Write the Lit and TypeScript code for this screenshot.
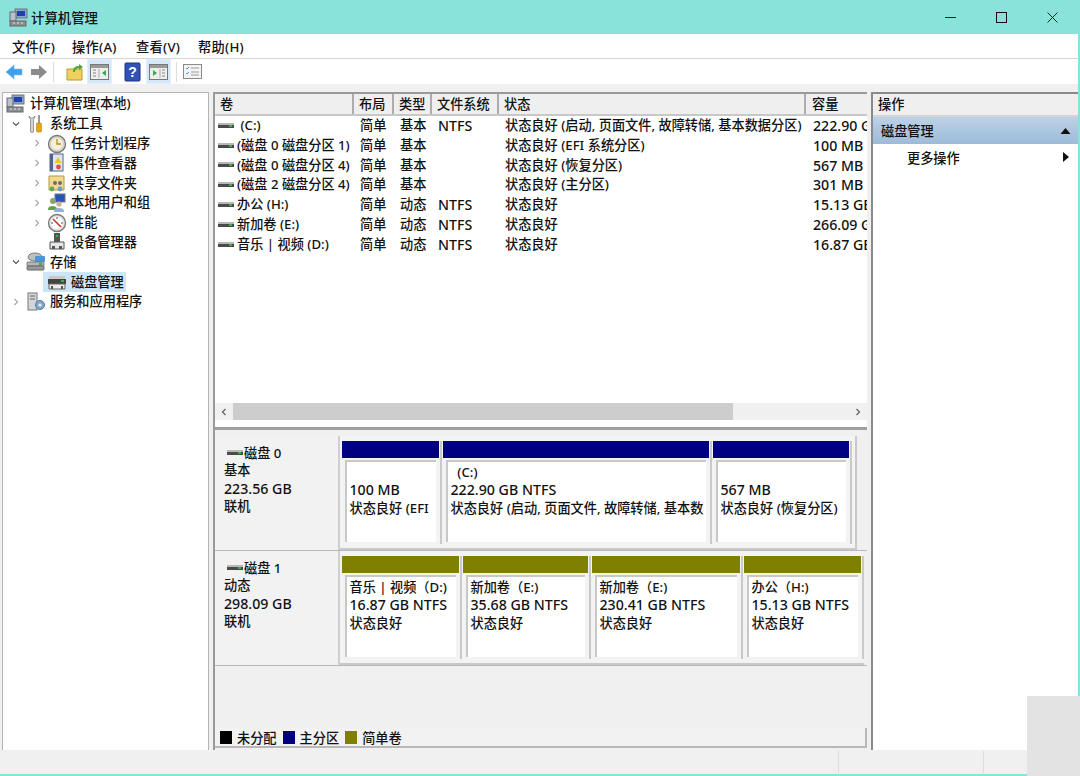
import { LitElement, html, css, svg } from 'lit';
import { customElement } from 'lit/decorators.js';

const driveIcon = html`<svg class="drive" width="16" height="8" viewBox="0 0 16 8">
  <rect x="0" y="1" width="16" height="2" fill="#b8b8b8" />
  <rect x="0" y="3" width="16" height="3" fill="#4a4a4a" />
  <rect x="11" y="3" width="3" height="2" fill="#35b04a" />
</svg>`;

const computerIcon = html`<svg width="19" height="19" viewBox="0 0 19 19">
  <rect x="6" y="1" width="12" height="9" fill="#8fa3c4" stroke="#6a7688" />
  <rect x="8" y="3" width="8" height="5" fill="#1c3fc0" />
  <rect x="1" y="4" width="6" height="9" fill="#b9c0ca" stroke="#667" />
  <rect x="1" y="13" width="16" height="5" fill="#8b8f94" stroke="#666" />
  <path d="M4 15h2M8 15h2M12 15h2" stroke="#e4e4e4" />
</svg>`;

const tools = svg`<path d="M3 2c0 2 1 3 1.500 3.500V17a1.500 1.500 0 0 0 3 0V5.500C8 5 9 4 9 2L7 4H5z" fill="#d4d4d4" stroke="#777" stroke-width=".7"/><rect x="12" y="1" width="2" height="8" fill="#9a9a9a"/><rect x="10.500" y="9" width="5" height="9" rx="1" fill="#e8a510" stroke="#a87406" stroke-width=".5"/>`;
const clock = svg`<circle cx="10" cy="10" r="8.500" fill="#d9d4c0" stroke="#777" stroke-width="1.300"/><circle cx="10" cy="10" r="6" fill="#f4efdc"/><path d="M10 5v5h4" fill="none" stroke="#b58a1d" stroke-width="1.300"/>`;
const eventLog = svg`<rect x="3" y="1" width="13" height="17" fill="#dfe4f0" stroke="#52648c"/><rect x="3" y="1" width="3" height="17" fill="#52648c"/><path d="M11 4l3.500 6h-7z" fill="#f2c21d"/><circle cx="11.500" cy="14" r="2.400" fill="#d05050"/>`;
const share = svg`<path d="M2 3h15v14H2z" fill="#f2d98b" stroke="#b59a4a"/><circle cx="8" cy="10" r="2" fill="#6c6c6c"/><circle cx="13" cy="10" r="2" fill="#6c6c6c"/><circle cx="5" cy="16" r="2.400" fill="#5cab5c"/><circle cx="13" cy="16" r="2.400" fill="#6c9bcc"/>`;
const users = svg`<rect x="8" y="1" width="10" height="8" fill="#2a53c0" stroke="#777"/><circle cx="6" cy="8" r="3" fill="#8aa070"/><path d="M1 16c0-4 9-4 9 0v1H1z" fill="#62a050"/><circle cx="12" cy="11" r="2.600" fill="#c8b090"/><path d="M7 18c0-4 10-4 10 0v1H7z" fill="#90b0d8"/>`;
const perf = svg`<circle cx="10" cy="10" r="8.500" fill="#e2e2e2" stroke="#777" stroke-width="1.300"/><circle cx="10" cy="10" r="6" fill="#fff"/><path d="M6 6l8 8" stroke="#c8322a" stroke-width="1.600"/><path d="M10 4v2M4 10h2M14 10h2" stroke="#555"/>`;
const device = svg`<rect x="7" y="1" width="6" height="9" fill="#555"/><rect x="9" y="3" width="2" height="2" fill="#35b04a"/><path d="M3 10h14v7H3z" fill="#e6e6e6" stroke="#555"/><rect x="5" y="14" width="3" height="3" fill="#555"/><rect x="12" y="14" width="3" height="3" fill="#555"/>`;
const storage = svg`<ellipse cx="9" cy="5" rx="7" ry="4" fill="#b9c4b9" stroke="#777"/><rect x="9" y="4" width="10" height="6" rx="1" fill="#4c94d8"/><rect x="1" y="10" width="17" height="4" rx="1" fill="#b8b8b8" stroke="#777"/><rect x="1" y="14" width="17" height="4" rx="1" fill="#999" stroke="#666"/><rect x="13" y="11" width="3" height="2" fill="#35b04a"/>`;
const disk = svg`<rect x="2" y="4" width="16" height="3" fill="#c8c8c8"/><rect x="1" y="7" width="18" height="5" fill="#444"/><rect x="14" y="8" width="3" height="2" fill="#35b04a"/><path d="M2 12h16v5H2z" fill="#eee" stroke="#666"/><rect x="4" y="14" width="2" height="3" fill="#555"/><rect x="14" y="14" width="2" height="3" fill="#555"/>`;
const services = svg`<rect x="2" y="1" width="9" height="17" fill="#d2d6dc" stroke="#777"/><path d="M4 4h5M4 7h5" stroke="#666"/><circle cx="14" cy="13" r="4.500" fill="#7fa8cc" stroke="#5a7a99"/><circle cx="14" cy="13" r="1.600" fill="#eef"/>`;

const treeIcon = (body: unknown) => html`<svg width="20" height="20" viewBox="0 0 20 20">${body}</svg>`;

const chevR = html`<svg width="8" height="8" viewBox="0 0 8 8"><path d="M2.500 1l3 3-3 3" fill="none" stroke="#a6a6a6" stroke-width="1.100" /></svg>`;
const chevD = html`<svg width="8" height="8" viewBox="0 0 8 8"><path d="M1 2.500l3 3 3-3" fill="none" stroke="#555" stroke-width="1.100" /></svg>`;

const treeRows = [
  { label: '系统工具', level: 1, arrow: 'd', icon: tools },
  { label: '任务计划程序', level: 2, arrow: 'r', icon: clock },
  { label: '事件查看器', level: 2, arrow: 'r', icon: eventLog },
  { label: '共享文件夹', level: 2, arrow: 'r', icon: share },
  { label: '本地用户和组', level: 2, arrow: 'r', icon: users },
  { label: '性能', level: 2, arrow: 'r', icon: perf },
  { label: '设备管理器', level: 2, arrow: '', icon: device },
  { label: '存储', level: 1, arrow: 'd', icon: storage },
  { label: '磁盘管理', level: 2, arrow: '', icon: disk, selected: true },
  { label: '服务和应用程序', level: 1, arrow: 'r', icon: services },
];

const volumes = [
  [' (C:)', '简单', '基本', 'NTFS', '状态良好 (启动, 页面文件, 故障转储, 基本数据分区)', '222.90 GB'],
  ['(磁盘 0 磁盘分区 1)', '简单', '基本', '', '状态良好 (EFI 系统分区)', '100 MB'],
  ['(磁盘 0 磁盘分区 4)', '简单', '基本', '', '状态良好 (恢复分区)', '567 MB'],
  ['(磁盘 2 磁盘分区 4)', '简单', '基本', '', '状态良好 (主分区)', '301 MB'],
  ['办公 (H:)', '简单', '动态', 'NTFS', '状态良好', '15.13 GB'],
  ['新加卷 (E:)', '简单', '动态', 'NTFS', '状态良好', '266.09 GB'],
  ['音乐 | 视频 (D:)', '简单', '动态', 'NTFS', '状态良好', '16.87 GB'],
];

const headers = ['卷', '布局', '类型', '文件系统', '状态', '容量'];

const disks = [
  {
    name: '磁盘 0',
    kind: '基本',
    size: '223.56 GB',
    basic: true,
    parts: [
      { w: 100, lines: ['', '100 MB', '状态良好 (EFI'] },
      { w: 269, lines: ['\u00a0\u00a0(C:)', '222.90 GB NTFS', '状态良好 (启动, 页面文件, 故障转储, 基本数'] },
      { w: 139, lines: ['', '567 MB', '状态良好 (恢复分区)'] },
    ],
  },
  {
    name: '磁盘 1',
    kind: '动态',
    size: '298.09 GB',
    basic: false,
    parts: [
      { w: 120, lines: ['音乐 | 视频（D:)', '16.87 GB NTFS', '状态良好'] },
      { w: 128, lines: ['新加卷（E:)', '35.68 GB NTFS', '状态良好'] },
      { w: 151, lines: ['新加卷（E:)', '230.41 GB NTFS', '状态良好'] },
      { w: 120, lines: ['办公（H:)', '15.13 GB NTFS', '状态良好'] },
    ],
  },
];

@customElement('app-root')
export class AppRoot extends LitElement {
  static styles = css`
    :host {
      display: block;
      width: 1080px;
      height: 776px;
      font-family: 'Noto Sans', 'Noto Sans CJK SC', sans-serif;
      font-size: 13.2px;
      font-weight: 500;
      color: #111;
      background: #f0f0f0;
      position: relative;
      overflow: hidden;
    }
    .n { font-size: 14.2px; }
    .window {
      display: flex;
      flex-direction: column;
      height: 774px;
      border-bottom: 2px solid #8ae3db;
      border-right: 2px solid #8ae3db;
    }
    .titlebar {
      height: 34px;
      flex: none;
      background: #8ae3db;
      display: flex;
      align-items: center;
      padding-left: 9px;
      gap: 3px;
      font-size: 13.4px;
    }
    .titlebar .title { flex: 1; }
    .winbtns { display: flex; }
    .winbtns div {
      width: 51px;
      height: 34px;
      display: flex;
      align-items: center;
      justify-content: center;
    }
    .menubar {
      height: 24px;
      flex: none;
      background: #fff;
      display: grid;
      grid-template-columns: 60px 64px 62px auto;
      align-items: center;
      padding-left: 12px;
      letter-spacing: 0.3px;
      border-bottom: 1px solid #d4d4d4;
    }
    .toolbar {
      height: 25px;
      flex: none;
      background: #fff;
      display: flex;
      align-items: center;
      padding-left: 1px;
    }
    .tb {
      width: 25px;
      height: 25px;
      display: flex;
      align-items: center;
      justify-content: center;
    }
    .tb.on { background: #d6e8f8; border: 1px solid #e4f0fb; box-sizing: border-box; }
    .tbsep { width: 1px; height: 20px; background: #dcdcdc; margin: 0 7px; }
    .main {
      flex: 1;
      display: flex;
      padding: 8px 0 0 2px;
      gap: 4px;
      min-height: 0;
    }
    .tree {
      width: 207px;
      flex: none;
      background: #fff;
      border: 1px solid #b4b4b4;
      border-bottom: none;
      box-sizing: border-box;
      padding-top: 1px;
    }
    .trow {
      height: 19.8px;
      display: flex;
      align-items: center;
      white-space: nowrap;
    }
    .trow .arrow {
      width: 8px;
      display: flex;
      flex: none;
      margin-right: 6px;
    }
    .trow svg { flex: none; }
    .trow .lbl { margin-left: 3px; padding: 0 2px 0 1px; line-height: 19px; }
    .selbg { background: #cde6f7; display: flex; align-items: center; margin-left: -4px; padding-left: 4px; }
    .lv0 { padding-left: 3px; }
    .lv0 .lbl { margin-left: 4px; }
    .lv1 { padding-left: 9px; }
    .lv2 { padding-left: 30px; }
    .center {
      width: 654px;
      flex: none;
      display: flex;
      flex-direction: column;
      box-sizing: border-box;
      border-left: 2px solid #9a9a9a;
      border-top: 2px solid #9a9a9a;
    }
    .list {
      height: 333px;
      flex: none;
      background: #fff;
      display: flex;
      flex-direction: column;
      border-bottom: 3px solid #a0a0a0;
    }
    .cols {
      display: grid;
      grid-template-columns: 139px 40px 38px 67px 307px 61px;
    }
    .heads {
      height: 20px;
      flex: none;
      background: #efefef;
      border-bottom: 2px solid #c8c8c8;
    }
    .heads div {
      padding-left: 5px;
      line-height: 20px;
      border-right: 2px solid #adadad;
      overflow: hidden;
    }
    .heads div:last-child { border-right: none; padding-left: 6px; }
    .rows { flex: 1; overflow: hidden; }
    .vrow { height: 19.8px; line-height: 19.8px; white-space: nowrap; }
    .vrow > div { overflow: hidden; padding-left: 6px; }
    .vrow > div:first-child { padding-left: 3px; display: flex; align-items: center; gap: 3px; white-space: pre; }
    .vrow > div:last-child { padding-left: 7px; }
    .drive { flex: none; }
    .hscroll {
      height: 17px;
      flex: none;
      margin-bottom: 7px;
      background: #f0f0f0;
      display: flex;
      align-items: center;
    }
    .hscroll .end { width: 18px; flex: none; display: flex; justify-content: center; }
    .hscroll .thumb { width: 500px; height: 17px; background: #cdcdcd; flex: none; }
    .hscroll .gap { flex: 1; }
    .graph {
      flex: 1;
      display: flex;
      flex-direction: column;
      padding-top: 6px;
      min-height: 0;
    }
    .disk {
      height: 115px;
      flex: none;
      display: flex;
      box-sizing: border-box;
      border-bottom: 1px solid #b8b8b8;
    }
    .dlabel {
      width: 125px;
      flex: none;
      padding: 8.5px 0 0 9px;
      box-sizing: border-box;
      border-right: 2px solid #cfcfcf;
      background: #f2f2f2;
      line-height: 17.8px;
    }
    .dname { display: flex; align-items: center; gap: 1px; padding-left: 3px; }
    .dparts {
      display: flex;
      gap: 1px;
      padding: 5px 3px 4px 2px;
      border-bottom: 2px solid #c9c9c9;
      border-right: 2px solid #c9c9c9;
      height: 100%;
      box-sizing: border-box;
      background: #f3f3f3;
    }
    .d1 .dparts { border-right: none; padding-right: 0; }
    .part {
      flex: none;
      display: flex;
      flex-direction: column;
      border-right: 2px solid #c9c9c9;
      padding-right: 1px;
      box-sizing: border-box;
      overflow: hidden;
    }
    .bar { height: 17px; flex: none; }
    .bar.basic { background: #000080; }
    .bar.dyn { background: #808000; }
    .pbody {
      flex: 1;
      margin: 2px 3px 2px 3px;
      background: #fff;
      border-top: 2px solid #c8c8c8;
      border-left: 2px solid #c8c8c8;
      padding: 1px 0 0 2.5px;
      line-height: 18px;
      white-space: nowrap;
      overflow: hidden;
    }
    .pbody div { height: 18px; }
    .legend {
      margin-top: auto;
      height: 20px;
      flex: none;
      box-sizing: border-box;
      margin-bottom: 2px;
      background: #f2f2f2;
      border-right: 2px solid #b8b8b8;
      border-bottom: 2px solid #b8b8b8;
      display: flex;
      align-items: center;
      padding-left: 5px;
      gap: 6px;
    }
    .legend .key { display: flex; align-items: center; gap: 5px; }
    .swatch { width: 12px; height: 13px; }
    .actions {
      width: 207px;
      flex: none;
      background: #fff;
      box-sizing: border-box;
      border-left: 2px solid #8a8a8a;
      border-top: 2px solid #8a8a8a;
    }
    .ahead {
      height: 21px;
      line-height: 21px;
      padding-left: 5px;
      background: #efefef;
      border-bottom: 2px solid #d4d4d4;
    }
    .asec {
      height: 27px;
      display: flex;
      align-items: center;
      justify-content: space-between;
      padding: 0 7px 0 8px;
      background: linear-gradient(#bcd2e8, #9dbbd9);
    }
    .aitem {
      height: 26px;
      display: flex;
      align-items: center;
      justify-content: space-between;
      padding: 0 9px 0 34px;
    }
    .status {
      height: 24px;
      flex: none;
      display: flex;
      justify-content: flex-end;
      background: #f0f0f0;
    }
    .status div { border-left: 1px solid #dcdcdc; height: 22px; margin-top: 1px; box-sizing: border-box; }
    .status .s1 { width: 145px; }
    .status .s2 { width: 95px; }
    .patch {
      position: absolute;
      left: 1027px;
      top: 696px;
      width: 53px;
      height: 80px;
      background: #e3e3e3;
    }
  `;

  render() {
    return html`
      <div class="window">
        <div class="titlebar">
          ${computerIcon}
          <span class="title">计算机管理</span>
          <div class="winbtns">
            <div><svg width="11" height="11"><path d="M0 5.500h11" stroke="#222" /></svg></div>
            <div><svg width="11" height="11"><rect x=".5" y=".5" width="10" height="10" fill="none" stroke="#111" /></svg></div>
            <div><svg width="11" height="11"><path d="M.5.5l10 10M10.500.5l-10 10" stroke="#222" /></svg></div>
          </div>
        </div>
        <div class="menubar">
          <span>文件(F)</span><span>操作(A)</span><span>查看(V)</span><span>帮助(H)</span>
        </div>
        <div class="toolbar">
          <div class="tb"><svg width="18" height="16" viewBox="0 0 18 16"><path d="M1 8l8-7v4h8v6H9v4z" fill="#3f9fe8" stroke="#7cc0f0" stroke-width=".6" /></svg></div>
          <div class="tb"><svg width="18" height="16" viewBox="0 0 18 16"><path d="M17 8L9 1v4H1v6h8v4z" fill="#8c8c8c" /></svg></div>
          <div class="tbsep" style="margin:0 3px 0 2px"></div>
          <div class="tb" style="margin-left:5px"><svg width="18" height="18" viewBox="0 0 18 18"><path d="M1 6h15v11H1z" fill="#f0d060" stroke="#b89a30" /><path d="M7 9c0-4 2-6 6-6V1l4 3-4 3V5c-2 0-4 1-4 4z" fill="#4aa838" /></svg></div>
          <div class="tb on"><svg width="19" height="16" viewBox="0 0 19 16"><rect x=".5" y=".5" width="18" height="15" fill="#eee" stroke="#777" /><rect x="1" y="1" width="17" height="3" fill="#999" /><path d="M3 6h3M3 9h3M3 12h3" stroke="#888" /><path d="M9 5v9" stroke="#aaa" /><path d="M16 6v6l-4-3z" fill="#38a84a" /></svg></div>
          <div class="tb" style="margin-left:8px"><svg width="17" height="20" viewBox="0 0 17 20"><rect x="1" y="1" width="15" height="18" rx="1" fill="#2f52b8" stroke="#1c3380" /><text x="8.5" y="15" font-size="14" font-family="Liberation Sans" font-weight="700" text-anchor="middle" fill="#fff">?</text></svg></div>
          <div class="tb on" style="margin-left:1px"><svg width="19" height="16" viewBox="0 0 19 16"><rect x=".5" y=".5" width="18" height="15" fill="#eee" stroke="#777" /><rect x="1" y="1" width="17" height="3" fill="#999" /><path d="M13 6h3M13 9h3M13 12h3" stroke="#888" /><path d="M11 5v9" stroke="#aaa" /><path d="M4 6v6l4-3z" fill="#38a84a" /></svg></div>
          <div class="tbsep" style="margin:0 0 0 5px"></div>
          <div class="tb" style="margin-left:3px"><svg width="19" height="15" viewBox="0 0 19 15"><rect x=".5" y=".5" width="18" height="14" fill="#f4f4f4" stroke="#8a8a8a" /><path d="M3 4l1 1 2-2M3 9l1 1 2-2" fill="none" stroke="#3f9fe8" /><path d="M8 4h8M8 8h8M8 11h8" stroke="#999" /></svg></div>
        </div>
        <div class="main">
          <div class="tree">
            <div class="trow lv0">${computerIcon}<span class="lbl">计算机管理(本地)</span></div>
            ${treeRows.map(
              (r) => html`<div class="trow lv${r.level}">
                <span class="arrow">${r.arrow === 'd' ? chevD : r.arrow === 'r' ? chevR : ''}</span>
                ${r.selected
                  ? html`<span class="selbg">${treeIcon(r.icon)}<span class="lbl">${r.label}</span></span>`
                  : html`${treeIcon(r.icon)}<span class="lbl">${r.label}</span>`}
              </div>`
            )}
          </div>
          <div class="center">
            <div class="list">
              <div class="cols heads">
                ${headers.map((h) => html`<div>${h}</div>`)}
              </div>
              <div class="rows">
                ${volumes.map(
                  (v) => html`<div class="cols vrow">
                    <div>${driveIcon}<span>${v[0]}</span></div>
                    <div>${v[1]}</div>
                    <div>${v[2]}</div>
                    <div class="n">${v[3]}</div>
                    <div>${v[4]}</div>
                    <div class="n">${v[5]}</div>
                  </div>`
                )}
              </div>
              <div class="hscroll">
                <div class="end"><svg width="8" height="8" viewBox="0 0 8 8"><path d="M5.500 1l-3 3 3 3" fill="none" stroke="#606060" stroke-width="1.200" /></svg></div>
                <div class="thumb"></div>
                <div class="gap"></div>
                <div class="end"><svg width="8" height="8" viewBox="0 0 8 8"><path d="M2.500 1l3 3-3 3" fill="none" stroke="#606060" stroke-width="1.200" /></svg></div>
              </div>
            </div>
            <div class="graph">
              ${disks.map(
                (d, i) => html`<div class="disk d${i}">
                  <div class="dlabel">
                    <div class="dname">${driveIcon}<span>${d.name}</span></div>
                    <div>${d.kind}</div>
                    <div class="n">${d.size}</div>
                    <div>联机</div>
                  </div>
                  <div class="dparts">
                    ${d.parts.map(
                      (p) => html`<div class="part" style="width:${p.w}px">
                        <div class="bar ${d.basic ? 'basic' : 'dyn'}"></div>
                        <div class="pbody">
                          <div>${p.lines[0]}</div>
                          <div class="n">${p.lines[1]}</div>
                          <div>${p.lines[2]}</div>
                        </div>
                      </div>`
                    )}
                  </div>
                </div>`
              )}
              <div class="legend">
                <span class="key"><span class="swatch" style="background:#000"></span>未分配</span>
                <span class="key"><span class="swatch" style="background:#000080"></span>主分区</span>
                <span class="key"><span class="swatch" style="background:#808000"></span>简单卷</span>
              </div>
            </div>
          </div>
          <div class="actions">
            <div class="ahead">操作</div>
            <div class="asec">
              <span>磁盘管理</span>
              <svg width="11" height="6" viewBox="0 0 11 6"><path d="M5.500 0l5 6H.5z" fill="#111" /></svg>
            </div>
            <div class="aitem">
              <span>更多操作</span>
              <svg width="6" height="10" viewBox="0 0 6 10"><path d="M0 0l6 5-6 5z" fill="#111" /></svg>
            </div>
          </div>
        </div>
        <div class="status">
          <div class="s1"></div>
          <div class="s2"></div>
        </div>
      </div>
      <div class="patch"></div>
    `;
  }
}
